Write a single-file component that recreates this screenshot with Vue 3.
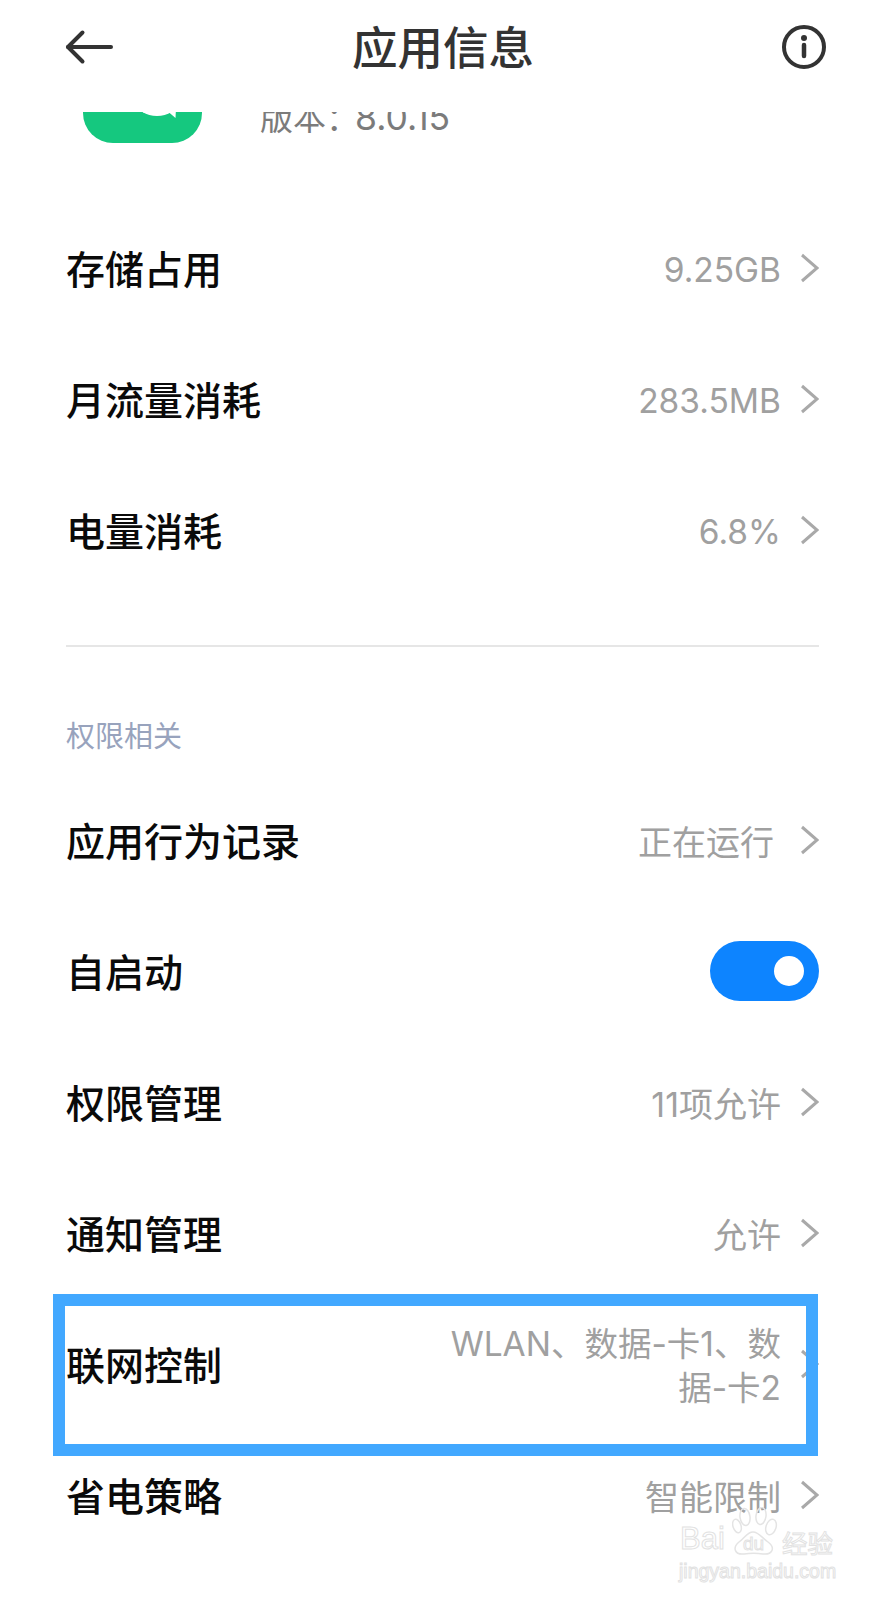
<script setup>
const groupOne = [
  { label: '存储占用', value: '9.25GB' },
  { label: '月流量消耗', value: '283.5MB' },
  { label: '电量消耗', value: '6.8%' }
]
const groupTwoTop = [
  { label: '应用行为记录', value: '正在运行', inset: true }
]
const groupTwoBottom = [
  { label: '权限管理', value: '11项允许' },
  { label: '通知管理', value: '允许' }
]
</script>

<template>
  <div class="screen">
    <header class="topbar">
      <svg class="back" width="50" height="36" viewBox="0 0 50 36" fill="none" stroke="#333" stroke-width="4" stroke-linecap="round" stroke-linejoin="round">
        <path d="M3 18H46" />
        <path d="M17.5 3.5 3 18 17.5 32.5" />
      </svg>
      <h1 class="title">应用信息</h1>
      <svg class="info" width="48" height="48" viewBox="0 0 48 48" fill="none">
        <circle cx="24" cy="24" r="20" stroke="#333" stroke-width="4" />
        <circle cx="24" cy="15" r="3" fill="#333" />
        <path d="M24 22V33" stroke="#333" stroke-width="4.5" stroke-linecap="round" />
      </svg>
    </header>

    <section class="summary">
      <div class="logo-clip">
        <svg class="logo" width="119" height="120" viewBox="0 0 119 120">
          <rect width="119" height="120" rx="30" fill="#15c87f" />
          <ellipse cx="74" cy="80" rx="20" ry="13" fill="#fff" />
          <path d="M82 86 92.5 95 93 85Z" fill="#fff" />
        </svg>
      </div>
      <p class="version">版本：<span class="ver-num">8.0.15</span></p>
    </section>

    <div class="row" v-for="r in groupOne" :key="r.label">
      <span class="label">{{ r.label }}</span>
      <span class="value">{{ r.value }}</span>
      <svg class="chev" width="20" height="30" viewBox="0 0 20 30" fill="none" stroke="#a9a9a9" stroke-width="3">
        <path d="M3 2 18 15 3 28" />
      </svg>
    </div>

    <div class="divider"></div>
    <div class="section">权限相关</div>

    <div class="row" v-for="r in groupTwoTop" :key="r.label">
      <span class="label">{{ r.label }}</span>
      <span class="value cjk" :class="{ inset: r.inset }">{{ r.value }}</span>
      <svg class="chev" width="20" height="30" viewBox="0 0 20 30" fill="none" stroke="#a9a9a9" stroke-width="3">
        <path d="M3 2 18 15 3 28" />
      </svg>
    </div>

    <div class="row">
      <span class="label">自启动</span>
      <span class="switch"><span class="knob"></span></span>
    </div>

    <div class="row" v-for="r in groupTwoBottom" :key="r.label">
      <span class="label">{{ r.label }}</span>
      <span class="value cjk">{{ r.value }}</span>
      <svg class="chev" width="20" height="30" viewBox="0 0 20 30" fill="none" stroke="#a9a9a9" stroke-width="3">
        <path d="M3 2 18 15 3 28" />
      </svg>
    </div>

    <div class="row">
      <span class="label">联网控制</span>
      <span class="value wrap">WLAN、数据-卡1、数据-卡2</span>
      <svg class="chev" width="20" height="30" viewBox="0 0 20 30" fill="none" stroke="#a9a9a9" stroke-width="3">
        <path d="M3 2 18 15 3 28" />
      </svg>
      <div class="highlight"></div>
    </div>

    <div class="row">
      <span class="label">省电策略</span>
      <span class="value cjk">智能限制</span>
      <svg class="chev" width="20" height="30" viewBox="0 0 20 30" fill="none" stroke="#a9a9a9" stroke-width="3">
        <path d="M3 2 18 15 3 28" />
      </svg>
    </div>

    <div class="watermark">
      <div class="wm-top">
        <span class="wm-bai">Bai</span>
        <span class="wm-paw">
          <svg width="46" height="50" viewBox="0 0 46 50" fill="none" stroke="#e4e4e4" stroke-width="1.5">
            <ellipse cx="5" cy="19" rx="4" ry="7" transform="rotate(-18 5 19)" />
            <ellipse cx="13" cy="10" rx="5" ry="8.5" transform="rotate(-8 13 10)" />
            <ellipse cx="29" cy="9" rx="5" ry="8.5" transform="rotate(8 29 9)" />
            <ellipse cx="39" cy="20" rx="5" ry="8" transform="rotate(18 39 20)" />
            <path d="M21 25C27 25 30 31 36 35 44 41 40 48 31 47 25 46 18 46 12 47 3 48 0 41 7 35 13 31 15 25 21 25Z" />
          </svg>
          <span class="wm-du">du</span>
        </span>
        <span class="wm-cn">经验</span>
      </div>
      <div class="wm-url">jingyan.baidu.com</div>
    </div>
  </div>
</template>

<style scoped>
.screen {
  position: relative;
  width: 885px;
  height: 1600px;
  overflow: hidden;
  background: #fff;
  font-family: "Noto Sans CJK SC", "Noto Sans", sans-serif;
}
.topbar {
  height: 112px;
  padding: 0 57px 18px 65px;
  box-sizing: border-box;
  display: flex;
  align-items: center;
  justify-content: space-between;
}
.title {
  margin: 0 9px 4px 0;
  font-size: 45.5px;
  font-weight: 500;
  color: #333;
}
.summary {
  height: 90px;
  padding-left: 83px;
  display: flex;
  align-items: flex-start;
  overflow: hidden;
}
.logo-clip {
  width: 119px;
  height: 31px;
  overflow: hidden;
}
.logo {
  display: block;
  margin-top: -89px;
}
.version {
  margin: -19px 0 0 58px;
  font-family: Inter, "Noto Sans CJK SC", sans-serif;
  font-size: 33px;
  line-height: 50px;
  color: #7b7b7b;
}
.ver-num {
  margin-left: -4px;
  font-size: 35.5px;
}
.row {
  position: relative;
  height: 131px;
  padding: 0 66px;
  display: flex;
  align-items: center;
}
.label {
  margin-bottom: 2px;
  font-size: 39px;
  font-weight: 500;
  color: #0a0a0a;
  flex: none;
}
.value {
  margin: 4px -1px 0 auto;
  font-family: Inter, "Noto Sans CJK SC", sans-serif;
  font-size: 33.5px;
  color: #a0a0a0;
  text-align: right;
}
.value.cjk {
  margin-top: 1px;
  font-size: 34px;
}
.value.inset {
  margin-right: 6px;
}
.value.wrap {
  width: 340px;
  line-height: 44px;
}
.chev {
  margin-left: 19px;
  flex: none;
}
.divider {
  height: 2px;
  margin: 50px 66px 0;
  background: #e6e6e6;
}
.section {
  margin: 67px 0 19px 66px;
  height: 41px;
  line-height: 41px;
  font-size: 29px;
  color: #98a3bd;
}
.switch {
  margin-left: auto;
  width: 109px;
  height: 60px;
  padding-right: 15px;
  box-sizing: border-box;
  border-radius: 30px;
  background: #0d84ff;
  display: flex;
  align-items: center;
  justify-content: flex-end;
}
.knob {
  width: 30px;
  height: 30px;
  border-radius: 50%;
  background: #fff;
}
.highlight {
  position: absolute;
  left: 53px;
  top: -4px;
  width: 765px;
  height: 162px;
  border: 12px solid #42a8ff;
  box-sizing: border-box;
  pointer-events: none;
}
.watermark {
  position: absolute;
  left: 679px;
  top: 1507px;
  width: 160px;
  color: transparent;
  -webkit-text-stroke: 1px #e2e2e2;
  font-family: "Liberation Sans", sans-serif;
}
.wm-top {
  display: flex;
  align-items: flex-end;
  height: 50px;
  padding-left: 1px;
}
.wm-bai {
  width: 52px;
  font-size: 31px;
  line-height: 36px;
}
.wm-paw {
  position: relative;
  width: 47px;
  height: 50px;
  flex: none;
}
.wm-paw svg {
  display: block;
}
.wm-du {
  position: absolute;
  left: 11px;
  top: 28px;
  font-size: 19px;
  line-height: 18px;
}
.wm-cn {
  margin-left: 3px;
  font-size: 25.5px;
  line-height: 30px;
  white-space: nowrap;
  font-family: "Noto Sans CJK SC", sans-serif;
}
.wm-url {
  margin-top: 3px;
  font-size: 19.5px;
  line-height: 22px;
  white-space: nowrap;
}
</style>
